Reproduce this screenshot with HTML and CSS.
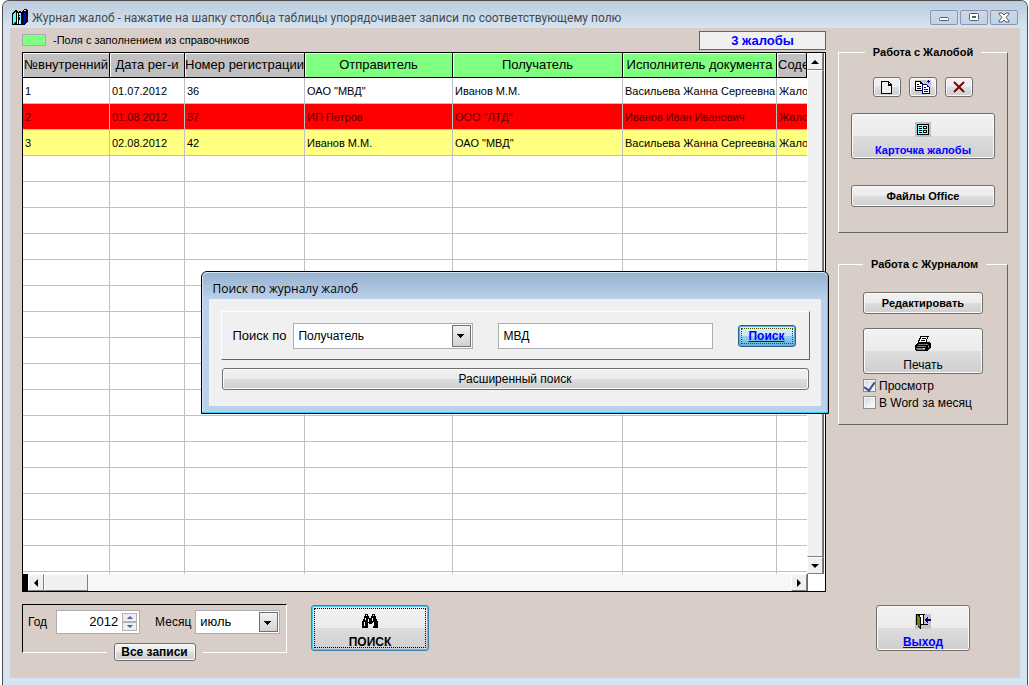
FILE: index.html
```
<!DOCTYPE html>
<html lang="ru">

<head>
    <meta charset="UTF-8">
    <meta name="viewport" content="width=device-width, initial-scale=1.0">
    <title>Журнал жалоб</title>
    <link rel="stylesheet" href="styles.css">
</head>

<body>
    <div class="window">
        <header class="titlebar">
            <svg class="app-icon" width="16" height="17" viewBox="0 0 16 17" shape-rendering="crispEdges">
                <path fill="#000" d="M0 4h1V3h1V2h1V1h2v1h1v1h1V2h2v1h1V2h1V1h1V0h3v1h1v12h-1v1h-1v1h-1v1H0z" />
                <path fill="#5ff" d="M1 5h1V4h1V3h1v10H3v1H2v1H1z" />
                <path fill="#ffa" d="M5 4h1v11H5zM7 4h1v2H7zM7 7h1v1H7zM7 11h1v4H7z" />
                <path fill="#5ff" d="M8 4h1v11H8z" />
                <path fill="#00c" d="M11 5h1V3h1V2h1v11h-1v1h-1v1h-1z" />
                <path fill="#fff" d="M12 1h2v1h-2z" />
            </svg>
            <span class="title">Журнал жалоб - нажатие на шапку столбца таблицы упорядочивает записи по соответствующему полю</span>
            <button class="window-button" aria-label="Свернуть">
                <svg width="12" height="11" viewBox="0 0 12 11">
                    <rect x="1.500" y="5.500" width="9" height="3" rx="1" fill="#fff" stroke="#555b66" />
                </svg>
            </button>
            <button class="window-button" aria-label="Развернуть">
                <svg width="12" height="11" viewBox="0 0 12 11">
                    <rect x="1.500" y="1.500" width="9" height="7" rx="1" fill="#fff" stroke="#555b66" />
                    <rect x="4.500" y="4.500" width="3" height="1" fill="#cfdcea" stroke="#555b66" />
                </svg>
            </button>
            <button class="window-button" aria-label="Закрыть">
                <svg width="12" height="11" viewBox="0 0 12 11">
                    <path d="M1 1h3l2 2 2-2h3v1L8 5.500 11 9v1H8L6 8l-2 2H1V9l3-3.500L1 2z" fill="#fff" stroke="#555b66" />
                </svg>
            </button>
        </header>

        <div class="client">
            <main class="journal">
                <div class="topline">
                    <span class="swatch"></span>
                    <span class="hint">-Поля с заполнением из справочников</span>
                    <output class="counter">3 жалобы</output>
                </div>

                <div class="grid">
                    <div class="grid-body">
                        <div class="grid-view">
                            <table>
                                <colgroup>
                                    <col class="c-num">
                                    <col class="c-date">
                                    <col class="c-reg">
                                    <col class="c-from">
                                    <col class="c-to">
                                    <col class="c-exec">
                                    <col>
                                </colgroup>
                                <thead>
                                    <tr>
                                        <th>№внутренний</th>
                                        <th>Дата рег-и</th>
                                        <th>Номер регистрации</th>
                                        <th class="ref">Отправитель</th>
                                        <th class="ref">Получатель</th>
                                        <th class="ref">Исполнитель документа</th>
                                        <th class="cut">Соде</th>
                                    </tr>
                                </thead>
                                <tbody>
                                    <tr>
                                        <td>1</td>
                                        <td>01.07.2012</td>
                                        <td>36</td>
                                        <td>ОАО "МВД"</td>
                                        <td>Иванов М.М.</td>
                                        <td>Васильева Жанна Сергеевна</td>
                                        <td>Жало</td>
                                    </tr>
                                    <tr class="red">
                                        <td>2</td>
                                        <td>01.08.2012</td>
                                        <td>37</td>
                                        <td>ИП Петров</td>
                                        <td>ООО "ЛТД"</td>
                                        <td>Иванов Иван Иванович</td>
                                        <td>Жало</td>
                                    </tr>
                                    <tr class="yellow">
                                        <td>3</td>
                                        <td>02.08.2012</td>
                                        <td>42</td>
                                        <td>Иванов М.М.</td>
                                        <td>ОАО "МВД"</td>
                                        <td>Васильева Жанна Сергеевна</td>
                                        <td>Жало</td>
                                    </tr>
                                    <tr><td></td><td></td><td></td><td></td><td></td><td></td><td></td></tr>
                                    <tr><td></td><td></td><td></td><td></td><td></td><td></td><td></td></tr>
                                    <tr><td></td><td></td><td></td><td></td><td></td><td></td><td></td></tr>
                                    <tr><td></td><td></td><td></td><td></td><td></td><td></td><td></td></tr>
                                    <tr><td></td><td></td><td></td><td></td><td></td><td></td><td></td></tr>
                                    <tr><td></td><td></td><td></td><td></td><td></td><td></td><td></td></tr>
                                    <tr><td></td><td></td><td></td><td></td><td></td><td></td><td></td></tr>
                                    <tr><td></td><td></td><td></td><td></td><td></td><td></td><td></td></tr>
                                    <tr><td></td><td></td><td></td><td></td><td></td><td></td><td></td></tr>
                                    <tr><td></td><td></td><td></td><td></td><td></td><td></td><td></td></tr>
                                    <tr><td></td><td></td><td></td><td></td><td></td><td></td><td></td></tr>
                                    <tr><td></td><td></td><td></td><td></td><td></td><td></td><td></td></tr>
                                    <tr><td></td><td></td><td></td><td></td><td></td><td></td><td></td></tr>
                                    <tr><td></td><td></td><td></td><td></td><td></td><td></td><td></td></tr>
                                    <tr><td></td><td></td><td></td><td></td><td></td><td></td><td></td></tr>
                                    <tr><td></td><td></td><td></td><td></td><td></td><td></td><td></td></tr>
                                    <tr><td></td><td></td><td></td><td></td><td></td><td></td><td></td></tr>
                                </tbody>
                            </table>
                        </div>
                        <div class="vscroll">
                            <button class="scroll-button" aria-label="Вверх">
                                <svg width="8" height="4" viewBox="0 0 8 4"><path d="M4 0l4 4H0z" /></svg>
                            </button>
                            <div class="thumb"></div>
                            <button class="scroll-button" aria-label="Вниз">
                                <svg width="8" height="4" viewBox="0 0 8 4"><path d="M0 0h8L4 4z" /></svg>
                            </button>
                        </div>
                    </div>
                    <div class="hscroll">
                        <button class="scroll-button" aria-label="Влево">
                            <svg width="4" height="8" viewBox="0 0 4 8"><path d="M4 0v8L0 4z" /></svg>
                        </button>
                        <div class="thumb"></div>
                        <div class="track"></div>
                        <button class="scroll-button" aria-label="Вправо">
                            <svg width="4" height="8" viewBox="0 0 4 8"><path d="M0 0l4 4-4 4z" /></svg>
                        </button>
                    </div>
                </div>

                <div class="footer">
                    <div class="period">
                        <div class="period-fields">
                            <label for="year">Год</label>
                            <div class="spin">
                                <input type="text" inputmode="numeric" id="year" value="2012">
                                <div class="spin-buttons">
                                    <button aria-label="Больше"><svg width="6" height="3" viewBox="0 0 6 3"><path d="M3 0l3 3H0z" /></svg></button>
                                    <button aria-label="Меньше"><svg width="6" height="3" viewBox="0 0 6 3"><path d="M0 0h6L3 3z" /></svg></button>
                                </div>
                            </div>
                            <label for="month" class="month-label">Месяц</label>
                            <div class="combo month">
                                <select id="month">
                                    <option>июль</option>
                                    <option>август</option>
                                </select>
                            </div>
                        </div>
                        <div class="period-all">
                            <button class="btn bold">Все записи</button>
                        </div>
                    </div>
                    <button class="btn tall find bold">
                        <svg width="18" height="15" viewBox="0 0 18 15" shape-rendering="crispEdges">
                            <path d="M4 0h3v2h1v2h2V2h1V0h3v2h1v3h1v2h1v7h-5V9h-1v1H8V9H7v5H1V7h1V5h1V2h1z" />
                            <path fill="#fff" d="M5 1h1v1H5zM12 1h1v1h-1zM4 4h1v2H4zM7 5h1v3H7zM11 4h1v3h-1zM3 8h1v4H3zM12 8h1v4h-1z" />
                        </svg>
                        <span>ПОИСК</span>
                    </button>
                </div>
            </main>

            <aside class="sidebar">
                <fieldset class="complaint">
                    <legend>Работа с Жалобой</legend>
                    <div class="tools">
                        <button class="btn tool" aria-label="Новая">
                            <svg width="12" height="13" viewBox="0 0 12 13" shape-rendering="crispEdges">
                                <path fill="#000" d="M0 0h8v1h1v1h1v1h1v10H0z" />
                                <path fill="#eee" d="M1 1h6v4h3v7H1z" />
                                <path fill="#eee" d="M8 2h1v1H8z" />
                            </svg>
                        </button>
                        <button class="btn tool" aria-label="Копировать">
                            <svg width="16" height="14" viewBox="0 0 16 14" shape-rendering="crispEdges">
                                <path fill="#c6c6c6" d="M0 0h16v14H0z" />
                                <path fill="#000" d="M0 1h6v1h1v1h1v8H0z" />
                                <path fill="#fff" d="M1 2h4v2h2v6H1z" />
                                <path fill="#000" d="M2 4h2v1H2zM2 6h4v1H2zM2 8h4v1H2z" />
                                <path fill="#000090" d="M7 4h5v1h1v1h1v1h1v7H7z" />
                                <path fill="#fff" d="M8 5h4v2h2v6H8z" />
                                <path fill="#000090" d="M9 7h2v1H9zM9 9h4v1H9zM9 11h4v1H9zM13 0h1v1h1v1h-1v1h-1V2h-1V1h1z" />
                            </svg>
                        </button>
                        <button class="btn tool" aria-label="Удалить">
                            <svg width="12" height="12" viewBox="0 0 12 12">
                                <path d="M1 1l10 10M11 1L1 11" fill="none" stroke="#800000" stroke-width="2" />
                            </svg>
                        </button>
                    </div>
                    <button class="btn tall card bold">
                        <svg width="16" height="15" viewBox="0 0 16 15" shape-rendering="crispEdges">
                            <path fill="#c0c0c0" d="M0 0h16v15H0z" />
                            <path fill="#000" d="M2 2h12v11H2z" />
                            <path fill="#8ff" d="M3 3h10v9H3z" />
                            <path fill="#000" d="M4 4h3v1H4zM4 6h3v1H4zM4 8h3v1H4zM4 10h3v1H4zM8 4h4v3H8zM8 8h4v3H8z" />
                            <path fill="#fff" d="M9 5h2v1H9zM9 9h2v1H9z" />
                        </svg>
                        <span>Карточка жалобы</span>
                    </button>
                    <button class="btn office bold">Файлы Office</button>
                </fieldset>

                <fieldset class="log">
                    <legend>Работа с Журналом</legend>
                    <button class="btn edit bold">Редактировать</button>
                    <button class="btn tall">
                        <svg width="18" height="16" viewBox="0 0 18 16" shape-rendering="crispEdges">
                            <path fill="#000" d="M6 0h9v1h-1v2h-1v3h3v1h1v5h-1v1h-1v1h-1v1H2v-1H1V9h1V8h1V7h1V4h1V2h1z" />
                            <path fill="#fff" d="M7 1h6v2h-1v3H5V5h1V3h1z" />
                            <path fill="#000" d="M8 2h4v1H8zM7 4h4v1H7z" />
                            <path fill="#777" d="M4 8h10v1H4zM3 10h9v1H3zM2 12h9v2H3v-1H2zM14 9h1v3h-1z" />
                            <path fill="#ddd" d="M9 12h2v1H9z" />
                        </svg>
                        <span>Печать</span>
                    </button>
                    <label class="check"><input type="checkbox" checked>Просмотр</label>
                    <label class="check"><input type="checkbox">В Word за месяц</label>
                </fieldset>

                <button class="btn tall exit bold">
                    <svg width="16" height="15" viewBox="0 0 16 15" shape-rendering="crispEdges">
                        <path fill="#c6c6c6" d="M0 0h16v15H0z" />
                        <path fill="#000" d="M1 0h9v10h3v1H6v4H5v-1H4v-1H3v-2H1z" />
                        <path fill="#fff" d="M5 1h3v9H6V3H5z" />
                        <path fill="#c6c6c6" d="M9 1h1v9H9z" />
                        <path fill="#808000" d="M2 1h1v1h1v1h1v10H4v-1H3v-1H2z" />
                        <path fill="#000090" d="M10 5h1V4h1V3h1v2h3v2h-3v2h-1V8h-1V7h-1z" />
                    </svg>
                    <span>Выход</span>
                </button>
            </aside>
        </div>
    </div>

    <div class="overlay">
        <div class="dialog" role="dialog" aria-labelledby="dialog-title">
            <div class="dialog-title" id="dialog-title">Поиск по журналу жалоб</div>
            <form class="dialog-body">
                <div class="search-row">
                    <label for="field">Поиск по</label>
                    <div class="combo field">
                        <select id="field">
                            <option>Получатель</option>
                            <option>Отправитель</option>
                        </select>
                    </div>
                    <input type="text" class="query" value="МВД" aria-label="Текст поиска">
                    <button type="button" class="btn go bold"><span>Поиск</span></button>
                </div>
                <button type="button" class="btn advanced">Расширенный поиск</button>
            </form>
        </div>
    </div>
</body>

</html>
```
FILE: styles.css
```
* {
    box-sizing: border-box;
}

body {
    margin: 0;
    background: #ffffff;
    color: #000000;
    font-family: "Liberation Sans", Arial, sans-serif;
    font-size: 12px;
    line-height: 16px;
}

button,
input,
select {
    border-radius: 0;
    color: inherit;
    font: inherit;
    margin: 0;
    outline: none;
    padding: 0;
}

svg {
    display: block;
    flex: none;
}

/* main window */
.window {
    display: flex;
    flex-direction: column;
    height: 100vh;
    margin: 0 1px 0 2px;
    padding: 0 7px 7px;
    background: #d6e3f1;
    border: 1px solid #4c4c50;
    border-bottom: none;
    border-radius: 7px 7px 0 0;
}

.titlebar {
    display: flex;
    align-items: center;
    gap: 2px;
    height: 27px;
    flex: none;
    margin: 0 -7px;
    padding: 6px 9px 0;
    background: linear-gradient(#bccbdc, #d6e4f1);
    border-radius: 6px 6px 0 0;
}

.title {
    flex: 1;
    overflow: hidden;
    padding-left: 2px;
    color: #45494f;
    font-family: Roboto, "Open Sans", sans-serif;
    white-space: nowrap;
}

.window-button {
    display: flex;
    align-items: center;
    justify-content: center;
    width: 28px;
    height: 15px;
    background: linear-gradient(#cbd8e6, #c3d3e4);
    border: 1px solid #8996b0;
    border-radius: 2px;
}

.client {
    display: flex;
    flex: 1;
    gap: 12px;
    min-height: 0;
    padding: 0 12px;
    background: #d8cec7;
}

.journal {
    display: flex;
    flex: 1;
    flex-direction: column;
    min-width: 0;
}

.topline {
    display: flex;
    align-items: center;
    flex: none;
    height: 24px;
}

.swatch {
    width: 24px;
    height: 12px;
    background: #80ff80;
    border: 1px solid #a5acb2;
}

.hint {
    flex: 1;
    padding-left: 7px;
    font-size: 11px;
}

.counter {
    width: 127px;
    height: 19px;
    background: #f0f0f0;
    border: 1px solid #646464;
    color: #0000ff;
    font-size: 13px;
    font-weight: bold;
    line-height: 18px;
    text-align: center;
}

/* table */
.grid {
    display: flex;
    flex: 1;
    flex-direction: column;
    min-height: 0;
    background: #ffffff;
    border: 1px solid #000000;
}

.grid-body {
    display: flex;
    flex: 1;
    min-height: 0;
}

.grid-view {
    flex: 1;
    overflow: hidden;
}

table {
    width: 100%;
    border-collapse: separate;
    border-spacing: 0;
    table-layout: fixed;
}

.c-num {
    width: 87px;
}

.c-date {
    width: 75px;
}

.c-reg {
    width: 120px;
}

.c-from {
    width: 148px;
}

.c-to {
    width: 170px;
}

.c-exec {
    width: 154px;
}

th,
td {
    overflow: hidden;
    white-space: nowrap;
}

th {
    height: 25px;
    padding: 0;
    background: #c0c0c0;
    border-right: 1px solid #000000;
    border-bottom: 1px solid #000000;
    box-shadow: inset 1px 1px #ffffff;
    font-size: 13px;
    font-weight: normal;
}

th.ref {
    background: #80ff80;
}

th.cut {
    padding-left: 1px;
    text-align: left;
}

td {
    height: 26px;
    padding: 0 0 0 2px;
    border-right: 1px solid #c0c0c0;
    border-bottom: 1px solid #c0c0c0;
    font-size: 11px;
}

td:last-child {
    border-right: none;
}

.red td {
    background: #ff0000;
    color: #5a0000;
}

.yellow td {
    background: #ffff80;
}

.vscroll {
    display: flex;
    flex-direction: column;
    width: 18px;
    padding-right: 2px;
}

.scroll-button,
.thumb {
    background: #f0f0f0;
    border: 1px solid;
    border-color: #ffffff #808080 #808080 #ffffff;
    box-shadow: 1px 0 #696969;
}

.scroll-button {
    display: flex;
    align-items: center;
    justify-content: center;
    flex: none;
    width: 16px;
    height: 17px;
}

.vscroll .thumb {
    flex: 1;
}

.hscroll {
    display: flex;
    flex: none;
    height: 17px;
    padding-right: 18px;
    border-left: 5px solid #000000;
}

.hscroll .thumb {
    width: 44px;
}

.track {
    flex: 1;
    background: repeating-conic-gradient(#f0f0f0 0 25%, #ffffff 0 50%) 0 0 / 2px 2px;
}

/* buttons */
.btn {
    height: 22px;
    background: linear-gradient(#f2f2f2, #ebebeb 50%, #dddddd 50%, #cfcfcf);
    border: 1px solid #707070;
    border-radius: 3px;
    box-shadow: inset 0 0 0 1px #fafafa;
    white-space: nowrap;
}

.bold {
    font-weight: bold;
}

.btn.tall {
    display: flex;
    align-items: center;
    flex-direction: column;
    justify-content: flex-end;
    gap: 5px;
    height: 46px;
    padding-bottom: 0;
}

/* bottom panel */
.footer {
    display: flex;
    align-items: flex-start;
    flex: none;
    gap: 24px;
    height: 86px;
    padding-top: 12px;
}

.period {
    width: 265px;
    height: 49px;
    border: 1px solid;
    border-color: #000000 #ffffff #ffffff #000000;
}

.period-fields {
    display: flex;
    align-items: center;
    padding: 5px 6px 5px 5px;
}

.spin {
    display: flex;
    width: 84px;
    height: 24px;
    margin-left: 9px;
    padding: 2px;
    background: #ffffff;
    border: 1px solid #abadb3;
}

.spin input {
    flex: 1;
    min-width: 0;
    padding-right: 4px;
    background: none;
    border: none;
    font-size: 13px;
    text-align: right;
}

.spin-buttons {
    display: flex;
    flex-direction: column;
    width: 15px;
}

.spin-buttons button {
    display: flex;
    align-items: center;
    justify-content: center;
    flex: 1;
    background: #eeeeee;
    border: 1px solid #b4b4b4;
    fill: #4c60a8;
}

.month-label {
    margin-left: 15px;
}

.combo {
    position: relative;
    background: #ffffff;
    border: 1px solid #abadb3;
}

.combo select {
    display: block;
    width: 100%;
    height: 100%;
    padding-left: 4px;
    appearance: none;
    background: none;
    border: none;
}

.combo::after {
    position: absolute;
    top: 1px;
    right: 1px;
    bottom: 1px;
    width: 17px;
    background: linear-gradient(#000000, #000000) 4px 8px / 7px 1px no-repeat,
        linear-gradient(#000000, #000000) 5px 9px / 5px 1px no-repeat,
        linear-gradient(#000000, #000000) 6px 10px / 3px 1px no-repeat,
        linear-gradient(#000000, #000000) 7px 11px / 1px 1px no-repeat,
        linear-gradient(#f2f2f2, #d2d2d2);
    border: 1px solid #707070;
    content: "";
    pointer-events: none;
}

.month {
    flex: 1;
    height: 24px;
    margin-left: 4px;
}

.month select {
    font-size: 13px;
}

.period-all {
    width: 96px;
    margin: 4px auto 0;
    padding: 0 7px;
    background: #d8cec7;
}

.period-all .btn {
    display: block;
    width: 100%;
    height: 18px;
    line-height: 16px;
}

.find {
    width: 118px;
    margin-top: 1px;
    border-color: #3c7fb1;
    box-shadow: inset 0 0 0 1px #48c8f0;
    outline: 1px dotted #000000;
    outline-offset: -4px;
}

/* right panel */
.sidebar {
    display: flex;
    flex: none;
    flex-direction: column;
    width: 170px;
    padding: 16px 0 27px;
}

fieldset {
    display: flex;
    flex-direction: column;
    min-width: 0;
    margin: 0;
    padding: 0 12px;
    border: 1px solid;
    border-color: #ffffff #646464 #646464 #ffffff;
}

legend {
    margin: 0 auto;
    padding: 0 8px;
    font-size: 11px;
    font-weight: bold;
    white-space: nowrap;
}

.complaint {
    margin-bottom: 23px;
    padding-bottom: 25px;
}

.tools {
    display: flex;
    justify-content: center;
    gap: 8px;
    padding: 17px 0 16px;
}

.btn.tool {
    display: flex;
    align-items: center;
    justify-content: center;
    width: 28px;
    height: 20px;
}

.card {
    color: #0000ff;
    font-size: 11px;
}

.office {
    margin-top: 26px;
    font-size: 11px;
}

.log {
    padding: 0 24px 13px;
}

.edit {
    margin: 20px 0 14px;
    font-size: 11px;
}

.check {
    display: flex;
    align-items: center;
    gap: 3px;
    height: 17px;
    white-space: nowrap;
}

.log .tall {
    margin-bottom: 3px;
}

.check input {
    flex: none;
    width: 13px;
    height: 13px;
    appearance: none;
    background: linear-gradient(135deg, #d4d8dc, #ffffff);
    border: 1px solid #8e8f8f;
    box-shadow: inset 0 0 0 1px #f4f4f4;
}

.check input:checked::after {
    display: block;
    width: 5px;
    height: 9px;
    margin: 0 auto;
    border: solid #3b4f9b;
    border-width: 0 2px 2px 0;
    content: "";
    transform: rotate(35deg);
}

.exit {
    width: 94px;
    margin: auto auto 0;
    color: #0000ff;
    text-decoration: underline;
}

/* search dialog */
.overlay {
    position: fixed;
    inset: 0;
    display: grid;
    place-items: center;
    pointer-events: none;
}

.dialog {
    width: 628px;
    padding: 0 7px 7px;
    background: #b9d1ea;
    border: 1px solid #000000;
    border-radius: 6px 6px 0 0;
    box-shadow: inset -1px -1px #2fd0f0, inset 1px 1px #d8e6f4;
    pointer-events: auto;
}

.dialog-title {
    height: 27px;
    margin: 0 -6px;
    padding: 8px 10px 0;
    background: linear-gradient(#98b3d0, #b9d1ea);
    border-top: 1px solid #d8e6f4;
    border-radius: 5px 5px 0 0;
    font-family: "Open Sans", "Noto Sans", sans-serif;
}

.dialog-body {
    display: flex;
    flex-direction: column;
    padding: 12px 11px 16px 12px;
    background: #f0f0f0;
}

.search-row {
    display: flex;
    align-items: center;
    height: 49px;
    padding: 0 13px 0 11px;
    border: 1px solid;
    border-color: #ffffff #646464 #646464 #ffffff;
    font-size: 13px;
}

.field {
    width: 180px;
    height: 26px;
    margin-left: 7px;
    font-size: 12px;
}

.query {
    flex: 1;
    min-width: 0;
    height: 26px;
    margin: 0 25px;
    padding: 0 4px;
    background: #ffffff;
    border: 1px solid #abadb3;
    font-size: 12px;
}

.go {
    width: 58px;
    background: linear-gradient(#dff2fb, #c4e5f6 50%, #98d1ef 50%, #68b3db);
    border-color: #2c628b;
    box-shadow: inset 0 0 0 1px #5fa8cf;
    color: #0000ff;
    font-size: 12px;
    outline: 1px dotted #4a4a00;
    outline-offset: -4px;
    text-decoration: underline;
}

.advanced {
    margin: 8px 1px 0;
}
```
